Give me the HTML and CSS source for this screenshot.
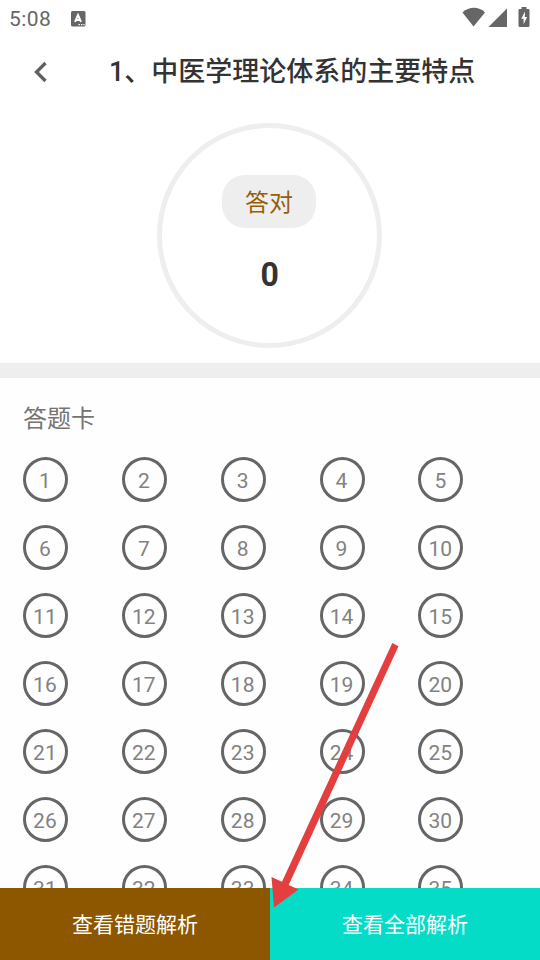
FILE: index.html
```html
<!DOCTYPE html>
<html lang="zh-CN">
<head>
<meta charset="utf-8">
<title>1、中医学理论体系的主要特点</title>
<link rel="stylesheet" href="styles.css">
</head>
<body>
<div class="screen">
  <header class="status">
    <span class="clock">5:08</span>
    <svg class="app-icon" width="15" height="16" viewBox="0 0 15 16"><rect width="14.5" height="15.5" rx="1.5" fill="#666"/><path d="M4 10.800 7 4 10 10.800M5 9h4" fill="none" stroke="#fff" stroke-width="2"/><path d="M7.500 13.700h1.400M10 13.700h1.400M12.400 13.700h1.200" stroke="#fff" stroke-width="1.300"/></svg>
    <svg class="signals" width="70" height="22" viewBox="0 0 70 22" fill="#666"><path d="M.5 5.500C7-.7 17-.7 23 5.500L11.500 19.500Z"/><path d="M26.500 20 45 1.500V20Z"/><path d="M59.500 0h5v2H66.500q1 0 1 1v15.500q0 1.500-1.500 1.500h-8q-1.500 0-1.500-1.500V3q0-1 1-1h2Z"/><path d="M63 4.500 59.300 11.700h2.300v5.500l3.500-7.300h-2.300Z" fill="#fff"/></svg>
  </header>
  <nav class="titlebar">
    <svg class="back" width="14" height="22" viewBox="0 0 14 22"><path d="M11.500 2 2.500 11l9 9" fill="none" stroke="#606060" stroke-width="3.300"/></svg>
    <h1>1、中医学理论体系的主要特点</h1>
  </nav>
  <section class="result">
    <div class="ring">
      <span class="label">答对</span>
      <strong class="score">0</strong>
    </div>
  </section>
  <main class="sheet">
    <h2>答题卡</h2>
    <div class="grid">
      <span>1</span><span>2</span><span>3</span><span>4</span><span>5</span>
      <span>6</span><span>7</span><span>8</span><span>9</span><span>10</span>
      <span>11</span><span>12</span><span>13</span><span>14</span><span>15</span>
      <span>16</span><span>17</span><span>18</span><span>19</span><span>20</span>
      <span>21</span><span>22</span><span>23</span><span>24</span><span>25</span>
      <span>26</span><span>27</span><span>28</span><span>29</span><span>30</span>
      <span>31</span><span>32</span><span>33</span><span>34</span><span>35</span>
    </div>
  </main>
  <footer class="actions">
    <button class="wrong">查看错题解析</button>
    <button class="all">查看全部解析</button>
  </footer>
  <svg class="arrow" width="130" height="270" viewBox="0 0 130 270"><path d="M123.300 3 129.500 6.200 19.700 245 29.500 249.500 5 267.500 2.500 237 13 241.800Z" fill="#e53e3e"/></svg>
</div>
</body>
</html>
```
FILE: styles.css
```css
* { box-sizing: border-box; }
body { margin: 0; background: #fff; font-family: Roboto, "Noto Sans CJK SC", sans-serif; }
.screen { position: relative; width: 540px; height: 960px; overflow: hidden; display: flex; flex-direction: column; }
.status { height: 38px; flex: none; display: flex; align-items: center; padding: 0 9px; color: #666; }
.clock { width: 62px; font-size: 21px; line-height: 38px; letter-spacing: .4px; }
.app-icon { margin-top: -1px; }
.signals { margin: -3px -1px 0 auto; }
.titlebar { height: 67px; flex: none; display: flex; align-items: center; padding-left: 34px; }
.back { flex: none; }
h1 { margin: 0 0 0 61px; font-size: 27px; line-height: 40px; font-weight: 500; color: #333; white-space: nowrap; }
.result { height: 273px; flex: none; padding-top: 18px; border-bottom: 15px solid #eee; }
.ring { width: 225px; height: 225px; margin-left: 157px; border: 5px solid #eee; border-radius: 50%; display: flex; flex-direction: column; align-items: center; }
.label { width: 94px; height: 53px; margin: 47px 1px 0 0; padding-top: 3px; border-radius: 23px; background: #eee; color: #965e08; font-size: 24px; line-height: 51px; text-align: center; }
.score { margin-top: 26px; font-size: 34px; line-height: 40px; color: #333; transform: scaleX(.94); }
.sheet { flex: 1; min-height: 0; overflow: hidden; padding: 23px 23px 0; background: #fefefe; }
h2 { margin: 0 0 20px; font-size: 24px; line-height: 36px; font-weight: 400; color: #747474; }
.grid { display: grid; grid-template-columns: repeat(5, 98.850px); grid-auto-rows: 45px; row-gap: 23px; }
.grid span { width: 45px; height: 45px; border: 3px solid #666; border-radius: 50%; color: #828282; font-size: 21px; line-height: 42px; font-weight: 400; text-align: center; letter-spacing: .1px; text-indent: -1px; white-space: nowrap; }
.actions { height: 72px; flex: none; display: flex; }
.actions button { flex: 1; border: 0; padding: 1px 0 0; color: #fff; font: 400 21px/30px Roboto, "Noto Sans CJK SC", sans-serif; }
.wrong { background: #8d5700; }
.all { background: #04dcc8; }
.arrow { position: absolute; left: 269px; top: 640px; }
```
